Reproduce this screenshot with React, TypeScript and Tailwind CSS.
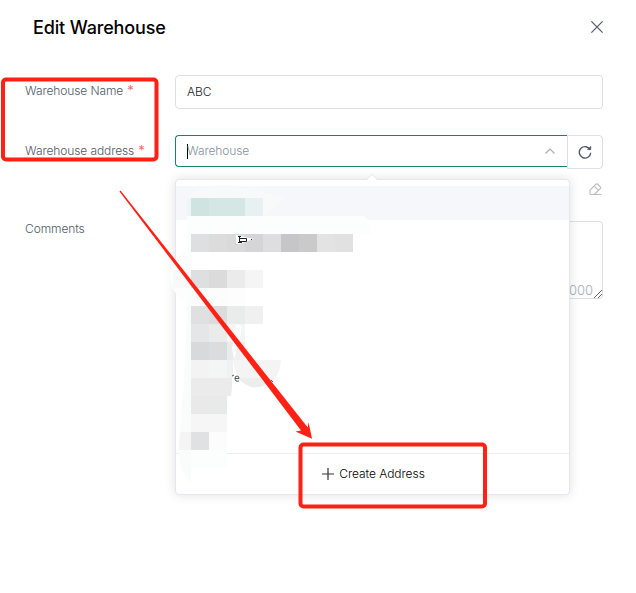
import React from "react";

type Cell = [x: number, y: number, fill: string];

const mosaic: Cell[] = [
  [191, 198, "#cfe4e1"], [209, 198, "#d4e7e5"], [227, 198, "#d4e7e5"], [245, 198, "#e7f1f2"],
  [191, 234, "#dedfe0"], [209, 234, "#dcdcdc"], [227, 234, "#dadadb"], [245, 234, "#d5d5d7"], [263, 234, "#dedee0"],
  [281, 234, "#c6c6c8"], [299, 234, "#cacaca"], [317, 234, "#e3e3e3"], [335, 234, "#e1e1e2"],
  [173, 270, "#f9f9f9"], [191, 270, "#dedfe0"], [209, 270, "#dbdbdb"], [227, 270, "#ebebeb"], [245, 270, "#f5f5f5"],
  [191, 288, "#fcfcfc"], [209, 288, "#fcfcfc"], [227, 288, "#fdfdfd"],
  [191, 306, "#e0e0e0"], [209, 306, "#dcdcdc"], [227, 306, "#eaecec"], [245, 306, "#f0f0f0"],
  [191, 324, "#e5e6e8"], [209, 324, "#ebebeb"], [227, 324, "#f4f5f5"],
  [191, 342, "#d8d9db"], [209, 342, "#dbdcde"], [227, 342, "#f0f0f0"],
  [191, 360, "#f3f3f3"], [209, 360, "#f3f6f5"],
  [191, 378, "#ebebeb"], [209, 378, "#ebebeb"],
  [191, 396, "#e9e9e9"], [209, 396, "#e8eaea"],
  [191, 414, "#f6f6f6"], [209, 414, "#f6f6f6"],
  [191, 432, "#e0e1e3"], [209, 432, "#fcfcfc"],
  [191, 450, "#fcfefe"], [209, 450, "#fcfefe"],
];

function Redaction() {
  return (
    <svg className="pointer-events-none absolute left-0 top-0" width="636" height="593" viewBox="0 0 636 593">
      <path d="M187 216V206Q188 187 220 185Q250 186 285 198L263 216Z" fill="#f7f9fb" />
      <path d="M187 216H364Q370 222 372 234H191V324L187 304Q170 292 170 276Q171 256 187 252Z" fill="#fcfefd" />
      <path d="M191 252H263V270H191Z" fill="#fff" />
      <path d="M187 306H191V482Q178 474 179 446L184 378Z" fill="#fafbfb" />
      <path d="M187 198H191V216H187Z" fill="#eff5f7" />
      {mosaic.map(([x, y, fill]) => (
        <rect key={`${x}-${y}`} x={x} y={y} width="18" height="18" fill={fill} shapeRendering="crispEdges" />
      ))}
      <path d="M227 342H234V360H227Z" fill="#ebebeb" />
      <path d="M227 360H233V378H227Z" fill="#f1f1f1" />
      <path d="M227 378H232V387L231 396H227Z" fill="#ebebeb" />
      <path d="M180 432H191V450H179Z" fill="#f4f4f4" />
      <path d="M236 324L242 326L239 342L234 360L232 348Z" fill="#fff" />
      <path d="M233 360H281Q280 374 273 381Q258 392 245 384Q235 377 233 360Z" fill="#f4f4f4" />
      <path d="M236 378H275Q258 393 245 384Z" fill="#ededed" />
      <path d="M236 235L254 239L239 244H236Z" fill="#fff" />
      <path d="M238 236.5H241M239.5 236V242.5M239 238.5H246.5V241.5H240M238 242.5H242M251 239.5H252" fill="none" stroke="#20212d" />
      <path d="M232 376L234 375M235 378.5Q235 376 237 376Q239 376 239 378.5H235Q235 382 239 381M271 380L273 382" fill="none" stroke="#444751" strokeWidth=".9" />
    </svg>
  );
}

function Annotations() {
  return (
    <svg className="pointer-events-none absolute left-0 top-0" width="636" height="593" viewBox="0 0 636 593">
      <g fill="none" stroke="#ff2114" strokeWidth="4">
        <rect x="3" y="79.5" width="153.5" height="80" rx="3" />
        <rect x="300.5" y="444.5" width="184.5" height="62" rx="3" />
      </g>
      <path d="M119.5 191.5L120.5 190.5L307.8 427.5L308.5 422L312 438.8L295.5 431.5L301 430.5Z" fill="#ff2114" />
    </svg>
  );
}

function Label({ children, required }: { children: string; required?: boolean }) {
  return (
    <div className="w-[150px] shrink-0 pt-2 tracking-[-0.1px] text-[#4e5969]">
      {children}
      {required && <span className="ml-1 text-[13px] font-normal leading-none text-[#f56c6c]">*</span>}
    </div>
  );
}

function AddressMenu() {
  return (
    <div className="absolute left-0 top-11 flex h-[316px] w-[395px] flex-col rounded border border-[#e4e7ed] bg-white pt-1.5 shadow-[0_0_12px_rgba(0,0,0,0.12)]">
      <div className="absolute -top-[5px] left-[192px] size-2 rotate-45 rounded-tl-[2px] border-l border-t border-[#e4e7ed] bg-white" />
      <div className="h-[34px] shrink-0 bg-[#f5f7fa]" />
      <div className="grow" />
      <button className="flex h-[41px] shrink-0 items-center justify-center border-t border-[#ebedf3] pl-0.5 text-black">
        <svg className="mr-[5px]" width="12" height="12" viewBox="0 0 12 12">
          <path d="M6 0V12M0 6H12" stroke="#333" strokeWidth="1.2" />
        </svg>
        <span>Create Address</span>
      </button>
    </div>
  );
}

export default function App() {
  return (
    <main className="relative h-[593px] w-[636px] overflow-hidden bg-white font-['Inter',sans-serif] text-xs leading-4 font-light tracking-[-0.05px]">
      <header className="flex h-[75px] items-start justify-between pl-[33px] pr-[33px] pt-[17px]">
        <h1 className="text-lg font-medium leading-[22px] tracking-[-0.15px] text-black">Edit Warehouse</h1>
        <svg className="mt-1" width="12" height="12" viewBox="0 0 12 12">
          <path d="M.4.4L11.6 11.6M11.6.4L.4 11.6" stroke="#4e5969" strokeWidth="1.2" />
        </svg>
      </header>

      <form className="pl-[25px]">
        <div className="flex h-[60px]">
          <Label required>Warehouse Name</Label>
          <div className="flex h-[34px] w-[428px] items-center rounded border border-[#dcdfe6] px-[11px] text-[#1d2129]">ABC</div>
        </div>

        <div className="flex h-[78px]">
          <Label required>Warehouse address</Label>
          <div className="relative w-[428px]">
            <div className="flex items-start">
              <div className="flex h-8 w-[392px] items-center rounded-l border border-r-0 border-[#158467] pl-[11px] pr-3 text-[#86909c]">
                <span className="h-[15px] w-px bg-black" />
                <span className="-ml-px grow tracking-[-0.1px]">Warehouse</span>
                <svg width="10" height="6" viewBox="0 0 10 6" fill="none">
                  <path d="M.5 5.5L5 1L9.5 5.5" stroke="#a8abb2" strokeWidth="1.1" />
                </svg>
              </div>
              <div className="flex h-[34px] w-9 items-center justify-center rounded-r border border-[#dcdfe6]">
                <svg width="14" height="14" viewBox="0 0 14 14" fill="none" stroke="#4e5969" strokeWidth="1.4">
                  <path d="M12.2 5A5.7 5.7 0 1 0 12.7 7.7" />
                  <path d="M12.8 1.2V4.5H9.5Z" fill="#4e5969" strokeWidth=".6" />
                </svg>
              </div>
            </div>
            <svg className="ml-auto mr-px mt-[14px]" width="13" height="13" viewBox="0 0 13 13" fill="none" stroke="#bbbec7" strokeWidth="1.2">
              <path d="M1 11.5H12.5M1 11.5V7.2L7.2 1Q7.8.5 8.4 1L11.5 4.1Q12 4.7 11.5 5.3L5.3 11.5M5.3 3.2L9.3 7.2" />
            </svg>
            <AddressMenu />
          </div>
        </div>

        <div className="flex">
          <Label>Comments</Label>
          <div className="mt-2 flex h-[78px] w-[428px] items-end justify-end rounded border border-[#dcdfe6]">
            <span className="mr-px text-[13px] text-[#a8abb2]">000</span>
            <svg width="8" height="8" viewBox="0 0 8 8">
              <path d="M0 8L8 0M4 8L8 4" stroke="#555" strokeWidth=".9" />
            </svg>
          </div>
        </div>
      </form>
      <Redaction />
      <Annotations />
    </main>
  );
}
